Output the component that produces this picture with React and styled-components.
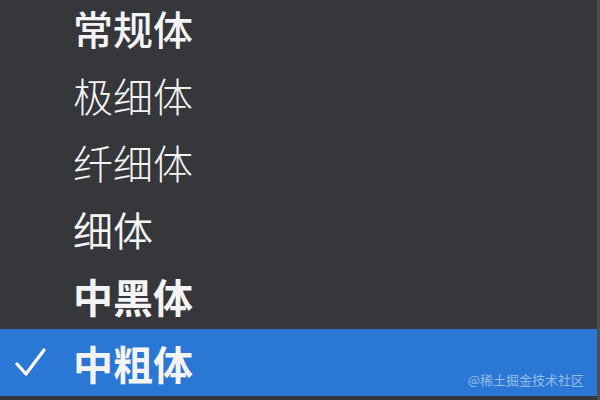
import React from "react";
import styled, { createGlobalStyle } from "styled-components";

const GlobalStyle = createGlobalStyle`
  html, body {
    margin: 0;
    padding: 0;
    background: #36373b;
  }
  body {
    font-family: "Noto Sans CJK SC", "Noto Sans", sans-serif;
  }
`;

const Menu = styled.div`
  position: relative;
  width: 600px;
  height: 400px;
  overflow: hidden;
  background: #36373b;
  border-right: 3px solid #4a4e55;
  box-sizing: border-box;
`;

const List = styled.ul`
  list-style: none;
  margin: -6px 0 0;
  padding: 0;
`;

const Item = styled.li`
  display: flex;
  align-items: center;
  height: 67px;
  padding-left: 73px;
  position: relative;
  font-size: 40px;
  line-height: 1;
  color: #f4f4f6;
  font-weight: ${(p) => p.$weight};
  background: ${(p) => (p.$selected ? "#2b77d6" : "transparent")};
`;

const Check = styled.svg`
  position: absolute;
  left: 14px;
  top: 50%;
  transform: translateY(-50%);
`;

const Watermark = styled.span`
  position: absolute;
  right: 13px;
  bottom: 11px;
  font-size: 13px;
  color: rgba(255, 255, 255, 0.5);
  font-family: "Noto Sans CJK SC", sans-serif;
`;

const fonts = [
  { name: "常规体", weight: 500 },
  { name: "极细体", weight: 300 },
  { name: "纤细体", weight: 300 },
  { name: "细体", weight: 350 },
  { name: "中黑体", weight: 700 },
  { name: "中粗体", weight: 700, selected: true },
];

export default function App() {
  return (
    <>
      <GlobalStyle />
      <Menu>
        <List>
          {fonts.map((f) => (
            <Item key={f.name} $weight={f.weight} $selected={f.selected}>
              {f.selected && (
                <Check width="34" height="32" viewBox="0 0 34 32">
                  <path
                    d="M3 17 L12 27 L30 3"
                    fill="none"
                    stroke="#fff"
                    strokeWidth="3.2"
                    strokeLinecap="round"
                    strokeLinejoin="round"
                  />
                </Check>
              )}
              {f.name}
            </Item>
          ))}
        </List>
        <Watermark>@稀土掘金技术社区</Watermark>
      </Menu>
    </>
  );
}
